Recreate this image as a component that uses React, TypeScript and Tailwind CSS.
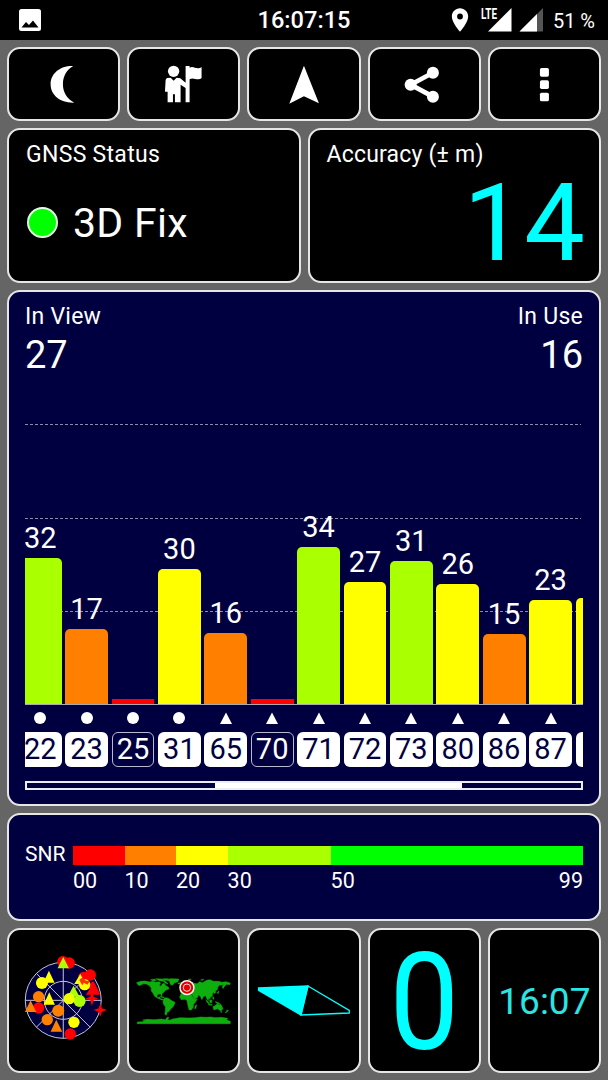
import type { ReactNode } from 'react';
import clsx from 'clsx';
import { MdPlace } from 'react-icons/md';

type Satellite = {
  id?: string;
  snr?: number;
  height: number;
  color: string;
  shape: 'circle' | 'triangle';
  unused?: boolean;
};

const satellites: Satellite[] = [
  { id: '22', snr: 32, height: 147.5, color: 'bg-[#aaff00]', shape: 'circle' },
  { id: '23', snr: 17, height: 76.3, color: 'bg-[#ff8000]', shape: 'circle' },
  { id: '25', height: 6.5, color: 'bg-[#ff0000]', shape: 'circle', unused: true },
  { id: '31', snr: 30, height: 136, color: 'bg-[#ffff00]', shape: 'circle' },
  { id: '65', snr: 16, height: 72.4, color: 'bg-[#ff8000]', shape: 'triangle' },
  { id: '70', height: 6.5, color: 'bg-[#ff0000]', shape: 'triangle', unused: true },
  { id: '71', snr: 34, height: 158.4, color: 'bg-[#aaff00]', shape: 'triangle' },
  { id: '72', snr: 27, height: 123, color: 'bg-[#ffff00]', shape: 'triangle' },
  { id: '73', snr: 31, height: 144, color: 'bg-[#aaff00]', shape: 'triangle' },
  { id: '80', snr: 26, height: 121, color: 'bg-[#ffff00]', shape: 'triangle' },
  { id: '86', snr: 15, height: 71.3, color: 'bg-[#ff8000]', shape: 'triangle' },
  { id: '87', snr: 23, height: 105, color: 'bg-[#ffff00]', shape: 'triangle' },
  // only the edge of this one is scrolled into view
  { height: 106.7, color: 'bg-[#ffff00]', shape: 'triangle' },
];

const snrScale = [
  { label: '00', grow: 10, color: 'bg-[#ff0000]' },
  { label: '10', grow: 10, color: 'bg-[#ff8000]' },
  { label: '20', grow: 10, color: 'bg-[#ffff00]' },
  { label: '30', grow: 20, color: 'bg-[#aaff00]' },
  { label: '50', grow: 49, color: 'bg-[#00ff00]' },
];

function Card({ className, children }: { className?: string; children: ReactNode }) {
  return (
    <div className={clsx('min-w-0 rounded-[13px] border-2 border-[#e6e6e6]', className)}>
      {children}
    </div>
  );
}

function StatusBar() {
  return (
    <header className="grid h-10 grid-cols-3 items-center bg-black px-[13px]">
      <svg viewBox="0 0 22 22" className="ml-[6px] size-[22px]">
        <rect width="22" height="22" rx="2.5" fill="#fff" />
        <path d="M2.5 18.5L7 13l3 3L14 11.5l5.5 7z" fill="#000" />
      </svg>
      <div className="pt-[2px] text-center text-[23.6px] font-medium leading-none">
        16:07:15
      </div>
      <div className="flex items-center justify-end">
        <MdPlace className="mr-[7px] size-[28px] shrink-0" />
        <svg viewBox="0 0 31 24" className="mr-[7px] h-6 w-[31px] shrink-0 overflow-visible">
          <path d="M7 23.5L30.5 0v23.5z" fill="#fff" />
          <text
            x="0"
            y="10.5"
            fontSize="14"
            fontWeight="700"
            textLength="16"
            lengthAdjust="spacingAndGlyphs"
            fill="#fff"
            stroke="#000"
            strokeWidth="2"
            paintOrder="stroke"
          >
            LTE
          </text>
        </svg>
        <svg viewBox="0 0 25 24" className="mr-[9px] h-6 w-[25px] shrink-0">
          <path d="M.5 23.5L24 0v23.5z" fill="#555" />
          <path d="M.5 23.5L18 6v17.5z" fill="#fff" />
        </svg>
        <div className="whitespace-nowrap pt-[2px] text-[20px] leading-none">51 %</div>
      </div>
    </header>
  );
}

function Toolbar() {
  return (
    <div className="grid h-[74px] grid-cols-5 grid-rows-1 gap-[7px]">
      <Card className="bg-black">
        <svg viewBox="28 147 328 210" className="size-full" fill="#fff">
          <path d="M221 198C184 196 153 219 153 253S184 310 224 308C202 297 190 277 190 253S201 208 221 198z" />
        </svg>
      </Card>
      <Card className="bg-black">
        <svg viewBox="388 147 328 210" className="size-full" fill="#fff">
          <circle cx="522" cy="214" r="17" />
          <path d="M503 234L513 233L522 242L531 233L542 235L558 248V198H570V203C583 196 591 212 606 201V234C592 245 583 229 570 238V307H558V264L543 254V307H526V283H520V307H504V275H496L498 240Q499 235 503 234z" />
        </svg>
      </Card>
      <Card className="bg-black">
        <svg viewBox="748 147 328 210" className="size-full" fill="#fff">
          <path d="M913 197L958 310L913 289L869 311z" />
        </svg>
      </Card>
      <Card className="bg-black">
        <svg viewBox="196 147 328 210" className="size-full" fill="#fff">
          <path d="M385 218L318 254L385 290" fill="none" stroke="#fff" strokeWidth="14" />
          <circle cx="385" cy="218" r="18" />
          <circle cx="318" cy="254" r="18" />
          <circle cx="385" cy="290" r="18" />
        </svg>
      </Card>
      <Card className="bg-black">
        <svg viewBox="558 147 328 210" className="size-full" fill="#fff">
          <rect x="708" y="204" width="27" height="26" rx="5" />
          <rect x="708" y="241" width="27" height="26" rx="5" />
          <rect x="708" y="278" width="27" height="26" rx="5" />
        </svg>
      </Card>
    </div>
  );
}

function SatelliteColumn({ satellite }: { satellite: Satellite }) {
  const { id, snr, height, color, shape, unused } = satellite;

  return (
    <div className="flex w-[42.8px] shrink-0 flex-col items-center">
      <div className="flex h-[288px] w-full flex-col items-center justify-end">
        {snr && <div className="mb-[3px] text-[29px] leading-[34px]">{snr}</div>}
        <div
          className={clsx('w-full shrink-0', color, !unused && 'rounded-t-[5px]')}
          style={{ height }}
        />
      </div>
      <svg viewBox="0 0 12 12" className="mt-[7px] size-3" fill="#fff">
        {shape === 'circle' ? <circle cx="6" cy="6" r="6" /> : <path d="M6 .5L12 12H0z" />}
      </svg>
      <div
        className={clsx(
          'mt-[8px] flex h-[35px] w-full items-center justify-center rounded-[6px] text-[29px] leading-none',
          unused ? 'border border-[#b9b9d0] text-white' : 'bg-white text-[#000040]'
        )}
      >
        {id}
      </div>
    </div>
  );
}

function SatelliteChart() {
  return (
    <Card className="h-[516px] bg-[#000040] px-4">
      <div className="flex h-[125px] justify-between pt-[11px]">
        <div>
          <div className="text-[23px] leading-[27px] tracking-[0.25px]">In View</div>
          <div className="mt-[3px] text-[38px] leading-[44px]">27</div>
        </div>
        <div className="text-right">
          <div className="text-[23px] leading-[27px] tracking-[0.25px]">In Use</div>
          <div className="mt-[3px] text-[38px] leading-[44px]">16</div>
        </div>
      </div>
      <div className="relative h-[350px] w-[558px] overflow-hidden">
        <svg className="absolute inset-0 size-full" stroke="#8c8cac" strokeDasharray="3 2">
          <path d="M0 7.5H556M0 101.5H556M0 194.5H556" />
        </svg>
        <div className="relative -ml-[6.2px] flex gap-[3.6px]">
          {satellites.map((satellite, index) => (
            <SatelliteColumn key={index} satellite={satellite} />
          ))}
        </div>
        <div className="absolute inset-x-0 top-[287px] h-px bg-[#a8a8b8]" />
      </div>
      <div className="mt-[14px] h-[9px] w-[558px] border-2 border-[#ededf4]">
        <div className="ml-[188px] h-full w-[247px] bg-white" />
      </div>
    </Card>
  );
}

function SnrLegend() {
  return (
    <Card className="flex h-[108px] bg-[#000040] pl-4 pr-4 pt-[31px]">
      <div className="-mt-[2px] mr-[7px] w-[41px] shrink-0 text-[21px] leading-none">
        SNR
      </div>
      <div className="relative flex flex-1">
        {snrScale.map(({ label, grow, color }) => (
          <div key={label} className="basis-0" style={{ flexGrow: grow }}>
            <div className={clsx('h-[19px]', color)} />
            <div className="mt-[3px] w-0 text-[21.5px] leading-[26px]">{label}</div>
          </div>
        ))}
        <div className="absolute right-0 top-[22px] text-[21.5px] leading-[26px]">99</div>
      </div>
    </Card>
  );
}

function SkyPlot() {
  return (
    <svg viewBox="28 30 326 423" className="size-full">
      <circle cx="190" cy="241" r="114" fill="#000040" />
      <g fill="none" stroke="#c4c4dc" strokeWidth="3">
        <circle cx="190" cy="241" r="114" />
        <circle cx="190" cy="241" r="57" />
        <path d="M190 127V355M76 241H304M109 160L271 322M271 160L109 322" />
      </g>
      <g fill="#ff0000">
        <circle cx="189" cy="125" r="17" />
        <circle cx="208" cy="129" r="17" />
        <circle cx="271" cy="165" r="17" />
        <circle cx="252" cy="172" r="17" />
        <circle cx="116" cy="264" r="17" />
        <circle cx="211" cy="342" r="17" />
        <path d="M281 184L302 224H258L270 206L250 200z" />
        <path d="M276 214L281 230L296 236L281 241L276 258L271 241L257 236L271 230z" />
        <path d="M301 250L306 265L321 270L306 275L301 290L296 275L281 270L296 265z" />
      </g>
      <g fill="#ffff00">
        <circle cx="126" cy="189" r="18" />
        <circle cx="254" cy="194" r="17" />
        <circle cx="222" cy="307" r="17" />
        <path d="M147 152L164 188H130zM241 162L258 192H223zM148 217L165 254H131z" />
      </g>
      <path d="M238 180L248 172L258 182L270 184L262 194L252 188L247 196z" fill="#ff3000" />
      <g fill="#aaff00">
        <path d="M190 111L207 145H173zM221 197L239 230H203z" />
        <circle cx="239" cy="243" r="18" />
      </g>
      <g fill="#ff8000">
        <circle cx="116" cy="230" r="17" />
        <circle cx="175" cy="272" r="18" />
        <circle cx="142" cy="299" r="17" />
        <path d="M92 241L109 276H75zM169 299L187 335H152z" />
      </g>
      <circle cx="208" cy="236" r="17" fill="#f0ff00" />
    </svg>
  );
}

function WorldMap() {
  return (
    <svg viewBox="28 30 326 423" className="size-full">
      <g fill="#0fae0f" stroke="#0fae0f" strokeWidth="1.5">
        <path d="M50 188L62 184L75 183L90 186L98 184L108 187L118 185L122 190L118 196L123 199L127 192L133 190L138 197L145 201L147 207L138 210L134 214L130 218L126 221L126 229L122 222L114 223L111 229L114 233L119 230L121 236L127 237L132 239L126 240L112 234L104 229L99 219L94 213L94 204L87 196L79 192L70 191L58 197L54 194z" />
        <path d="M92 179L104 177L110 181L100 183zM108 176L128 177L134 182L140 187L144 192L137 190L130 184L118 182zM130 176L146 176L142 180L134 181z" />
        <path d="M140 180L152 176L177 177L174 185L163 189L157 196L151 193L149 184zM174 189L181 188L181 192L175 192zM120 229L131 231L133 233L124 232z" />
        <path d="M133 234L140 233L148 236L153 241L165 247L163 254L159 261L152 267L148 274L142 277L139 286L135 283L136 272L137 261L131 253L129 245L131 238z" />
        <path d="M184 220L195 218L201 222L214 223L219 232L224 238L232 237L226 247L221 253L220 262L214 270L208 270L205 262L203 251L201 241L194 238L184 239L179 231zM226 257L230 254L228 265L224 266z" />
        <path d="M181 217L182 209L189 207L187 202L194 199L203 192L210 186L222 190L232 191L239 185L248 188L260 181L270 179L280 184L296 184L306 187L318 185L331 189L329 194L320 193L315 197L309 206L307 199L311 194L298 196L294 201L292 209L286 213L288 217L284 221L281 216L278 220L277 228L271 232L270 238L266 233L265 242L260 235L257 227L250 230L246 239L241 229L236 225L232 233L223 237L217 224L209 218L203 212L198 216L192 212L187 218z" />
        <path d="M258 239L266 247L269 252L262 248zM269 241L276 240L275 248L270 248zM278 230L281 231L282 238L279 237zM286 245L294 247L300 252L293 251zM292 219L297 212L295 221zM265 253L277 254L276 256L266 255z" />
        <path d="M279 260L285 257L291 252L296 253L298 256L301 251L306 259L309 266L304 272L299 271L293 266L282 270zM302 274L306 275L304 278zM322 269L325 272L320 277L316 279L320 273zM242 180L252 177L248 181zM204 178L213 177L211 181z" />
        <path d="M52 311V306L67 305L76 302L68 300L84 298L102 299L124 297L137 299L139 295L144 291L147 293L143 298L149 301L158 297L172 295L178 293L208 294L226 293L242 291L258 292L272 291L288 293L304 292L323 295L320 300L331 304V311z" />
      </g>
      <circle cx="201" cy="203" r="23" fill="#fff4f4" />
      <circle cx="201" cy="203" r="16.5" fill="#e80000" stroke="#d80000" strokeWidth="4" />
      <circle cx="201" cy="203" r="11" fill="#e80000" stroke="#ffdada" strokeWidth="3" />
    </svg>
  );
}

function Compass() {
  return (
    <svg viewBox="388 30 326 423" className="size-full" stroke="#00ffff" strokeWidth="4">
      <path d="M416 204L564 198L543 285L416 211z" fill="#00ffff" />
      <path d="M564 198L688 271V279L543 285z" fill="none" />
    </svg>
  );
}

export default function App() {
  return (
    <div className="h-[1080px] w-[608px] overflow-hidden bg-[#656565] font-['Roboto',sans-serif] text-white">
      <StatusBar />
      <main className="flex flex-col gap-[7px] px-[7px] pt-[7px]">
        <Toolbar />
        <div className="grid h-[155px] grid-cols-2 grid-rows-1 gap-[7px]">
          <Card className="bg-black pl-[17px] pr-4 pt-[11px]">
            <div className="text-[23px] leading-[27px] tracking-[0.3px]">GNSS Status</div>
            <div className="mt-[29px] flex items-center">
              <div className="ml-[1px] size-[31px] rounded-full border-2 border-[#e0ffe0] bg-[#00ff00]" />
              <div className="ml-[15px] pt-[1px] text-[41px] leading-[50px] tracking-[0.3px]">
                3D Fix
              </div>
            </div>
          </Card>
          <Card className="bg-black pl-4 pr-[14px] pt-[11px]">
            <div className="pl-[1px] text-[23px] leading-[27px] tracking-[0.2px]">
              Accuracy (± m)
            </div>
            <div className="text-right text-[108px] leading-[110px] text-[#00ffff]">14</div>
          </Card>
        </div>
        <SatelliteChart />
        <SnrLegend />
        <div className="grid h-[145px] grid-cols-5 grid-rows-1 gap-[7px]">
          <Card className="bg-black">
            <SkyPlot />
          </Card>
          <Card className="bg-black">
            <WorldMap />
          </Card>
          <Card className="bg-black">
            <Compass />
          </Card>
          <Card className="flex items-center justify-center bg-black pt-1 text-[136px] leading-none text-[#00ffff]">
            <div className="scale-x-[0.91]">0</div>
          </Card>
          <Card className="flex items-center justify-center bg-black pt-[2px] text-[37px] leading-none text-[#2be4e4]">
            16:07
          </Card>
        </div>
      </main>
    </div>
  );
}
